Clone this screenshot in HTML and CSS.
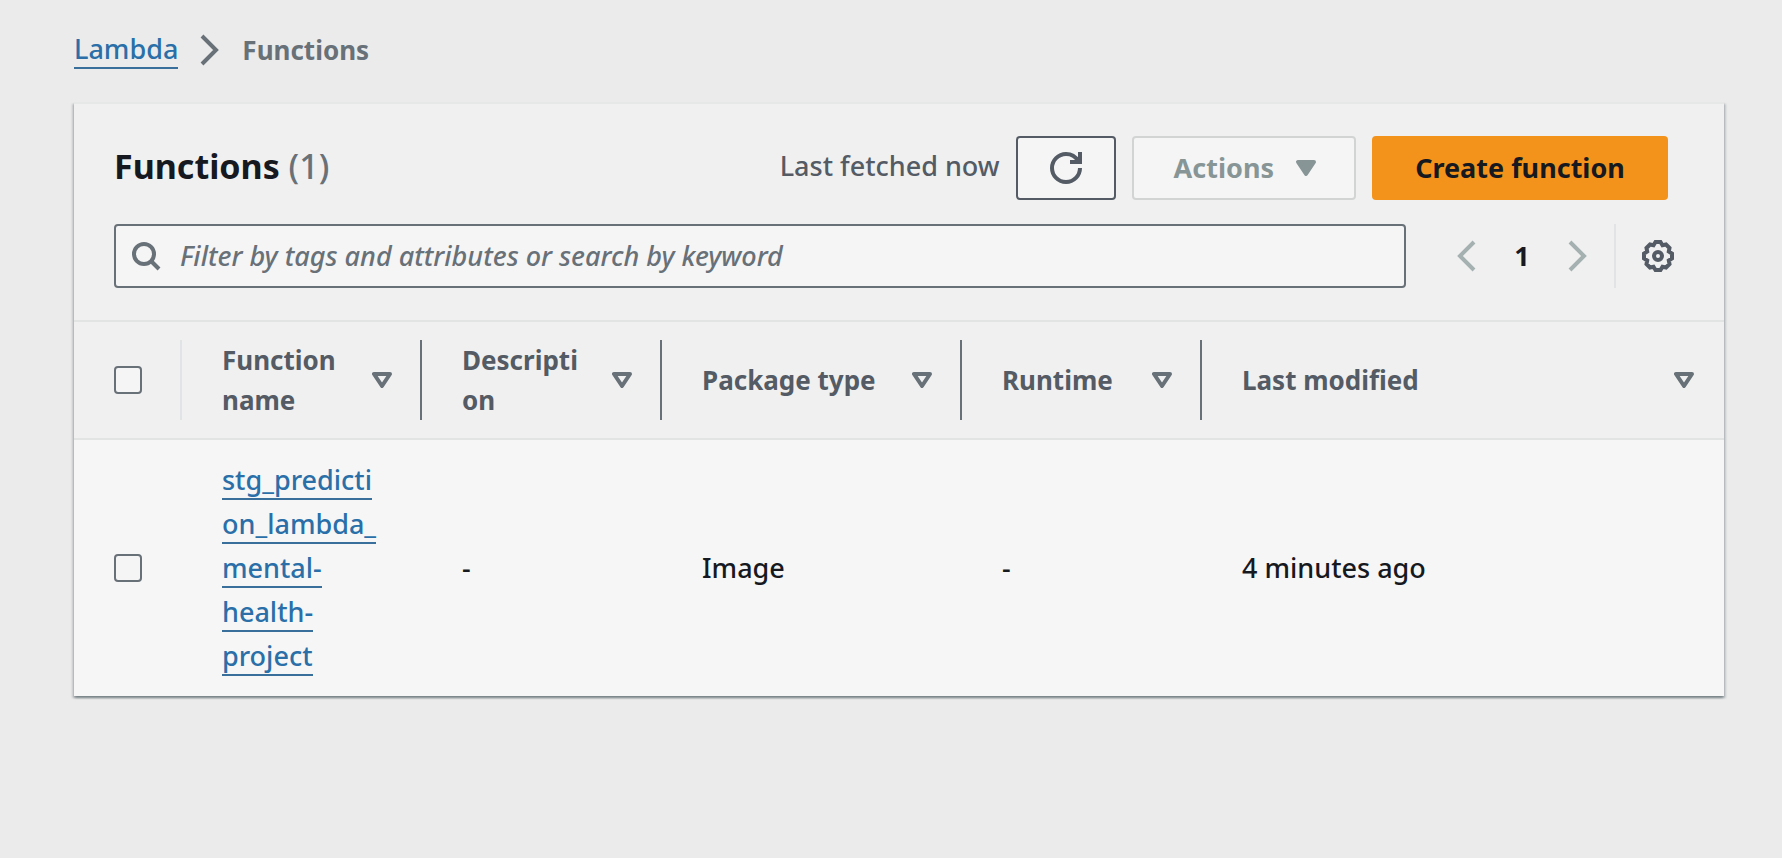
FILE: index.html
```html
<!DOCTYPE html>
<html lang="en">
<head>
<meta charset="utf-8">
<title>Functions - Lambda</title>
<link rel="stylesheet" href="styles.css">
</head>
<body>
<nav class="breadcrumb" aria-label="Breadcrumb">
  <a class="link" href="#lambda">Lambda</a>
  <svg class="crumb-arrow" width="32" height="32" viewBox="0 0 32 32" aria-hidden="true"><path d="M8 2l14 14L8 30"/></svg>
  <span class="current">Functions</span>
</nav>
<main class="panel">
  <header class="panel-head">
    <div class="title-row">
      <h1 class="title">Functions <span class="count">(1)</span></h1>
      <div class="actions">
        <span class="fetched">Last fetched now</span>
        <button class="btn btn-icon" type="button" aria-label="Refresh">
          <svg width="32" height="32" viewBox="0 0 32 32" aria-hidden="true"><path class="stroke" d="M30 16a14 14 0 1 1-14-14c5.500 0 9.500 2.500 12 7"/><path class="fill" d="M28 0h4v12H20V8h5l3-2z"/></svg>
        </button>
        <button class="btn btn-disabled" type="button" disabled>Actions
          <svg width="32" height="32" viewBox="0 0 32 32" aria-hidden="true"><path class="fill round" d="M8 10h16l-8 12z"/></svg>
        </button>
        <button class="btn btn-primary" type="button">Create function</button>
      </div>
    </div>
    <div class="filter-row">
      <label class="search">
        <svg width="32" height="32" viewBox="0 0 32 32" aria-hidden="true"><circle class="stroke" cx="14" cy="14" r="10"/><path class="stroke" d="M21 21l8 8"/></svg>
        <input class="search-input" type="text" aria-label="Filter functions" placeholder="Filter by tags and attributes or search by keyword">
      </label>
      <div class="pager">
        <button class="plain" type="button" disabled aria-label="Previous page"><svg width="32" height="32" viewBox="0 0 32 32" aria-hidden="true"><path class="stroke" d="M24 2L10 16l14 14"/></svg></button>
        <button class="plain page" type="button">1</button>
        <button class="plain" type="button" disabled aria-label="Next page"><svg width="32" height="32" viewBox="0 0 32 32" aria-hidden="true"><path class="stroke" d="M8 2l14 14L8 30"/></svg></button>
      </div>
      <div class="settings">
        <button class="plain" type="button" aria-label="Preferences"><svg width="32" height="32" viewBox="0 0 32 32" aria-hidden="true"><path class="stroke" d="M30 13.500v5L26.800 20.500 27.500 24 24 27.500 20.500 26.800 18.500 30h-5L11.500 26.800 8 27.500 4.500 24 5.200 20.500 2 18.500v-5L5.200 11.500 4.500 8 8 4.500 11.500 5.200 13.500 2h5L20.500 5.200 24 4.500 27.500 8 26.800 11.500z"/><circle class="stroke" cx="16" cy="16" r="4"/></svg></button>
      </div>
    </div>
  </header>
  <table class="grid">
    <thead>
      <tr>
        <th class="col-check"><div class="cell"><input class="check" type="checkbox" aria-label="Select all functions"></div></th>
        <th class="col"><div class="cell">Function<br>name<svg class="sort" width="20" height="16" viewBox="0 0 20 16" aria-hidden="true"><path d="M2 2h16l-8 12z"/></svg></div></th>
        <th class="col"><div class="cell">Descripti<br>on<svg class="sort" width="20" height="16" viewBox="0 0 20 16" aria-hidden="true"><path d="M2 2h16l-8 12z"/></svg></div></th>
        <th class="col-wide"><div class="cell">Package type<svg class="sort" width="20" height="16" viewBox="0 0 20 16" aria-hidden="true"><path d="M2 2h16l-8 12z"/></svg></div></th>
        <th class="col"><div class="cell">Runtime<svg class="sort" width="20" height="16" viewBox="0 0 20 16" aria-hidden="true"><path d="M2 2h16l-8 12z"/></svg></div></th>
        <th><div class="cell">Last modified<svg class="sort" width="20" height="16" viewBox="0 0 20 16" aria-hidden="true"><path d="M2 2h16l-8 12z"/></svg></div></th>
      </tr>
    </thead>
    <tbody>
      <tr>
        <td class="pick"><input class="check" type="checkbox" aria-label="Select stg_prediction_lambda_mental-health-project"></td>
        <td><a class="link" href="#function">stg_predicti<br>on_lambda_<br>mental-<br>health-<br>project</a></td>
        <td>-</td>
        <td>Image</td>
        <td>-</td>
        <td>4 minutes ago</td>
      </tr>
    </tbody>
  </table>
</main>
</body>
</html>
```
FILE: styles.css
```css
* { box-sizing: border-box; }
body {
  margin: 0;
  padding: 28px 58px 40px 74px;
  background: #ebebeb;
  color: #16191f;
  font: 500 27px/44px "Noto Sans", sans-serif;
}
svg { display: block; flex: none; fill: none; }
.stroke { stroke: currentColor; stroke-width: 4; }
.fill { fill: currentColor; }
.round { stroke: currentColor; stroke-width: 4; stroke-linejoin: round; }
button, input { font: inherit; }
.link { color: #2a6fa8; text-decoration: none; border-bottom: 2px solid #38709b; }
.breadcrumb { display: flex; align-items: center; height: 44px; margin-bottom: 30px; color: #687078; }
.breadcrumb .link { line-height: 36px; }
.crumb-arrow { margin: 0 16px; stroke: #687078; stroke-width: 4; }
.current { font-size: 26px; font-weight: 700; }
.panel {
  background: #f0f0f0;
  border-top: 2px solid #e6e7e7;
  box-shadow: 0 2px 2px rgba(0, 28, 36, .3), 2px 2px 2px rgba(0, 28, 36, .15), -2px 2px 2px rgba(0, 28, 36, .15);
}
.panel-head { padding: 32px 40px; }
.title-row { display: flex; align-items: flex-start; justify-content: space-between; padding-right: 16px; margin-bottom: 24px; }
.title { margin: 0; font-size: 34px; line-height: 60px; font-weight: 700; }
.count { font-weight: 500; color: #687078; }
.actions { display: flex; align-items: flex-start; gap: 16px; color: #545b64; }
.fetched { line-height: 60px; }
.btn {
  display: flex; align-items: center; justify-content: center; gap: 16px;
  height: 64px; padding: 0 40px;
  border: 2px solid #545b64; border-radius: 4px;
  background: #f5f5f5; color: #545b64;
  font-weight: 700;
}
.btn-icon { width: 100px; padding: 0; }
.btn-disabled { border-color: #d2d4d4; color: #879596; padding-right: 32px; }
.btn-primary { min-width: 296px; border-color: #f4931c; background: #f4931c; color: #16191f; }
.filter-row { display: flex; align-items: center; height: 64px; }
.search {
  display: flex; align-items: center; gap: 18px; flex: 1;
  height: 64px; padding: 0 14px;
  border: 2px solid #687078; border-radius: 4px;
  background: #f5f5f5; color: #687078;
}
.search-input { flex: 1; min-width: 0; padding: 0; border: 0; outline: 0; background: none; color: #16191f; }
.search-input::placeholder { color: #687078; font-style: italic; opacity: 1; }
.pager { display: flex; align-items: center; gap: 24px; padding: 0 20px 0 44px; }
.plain { padding: 0; border: 0; background: none; color: #545b64; }
.plain:disabled { color: #a5b1b1; }
.page { width: 32px; color: #16191f; font-weight: 700; }
.settings { display: flex; align-items: center; height: 64px; padding: 0 10px 0 26px; border-left: 2px solid #e1e4e4; }
.grid { width: 100%; table-layout: fixed; border-collapse: separate; border-spacing: 0; }
.grid th { padding: 18px 0; border-top: 2px solid #e2e4e4; border-bottom: 2px solid #e2e4e4; color: #545b64; font-size: 26px; line-height: 40px; text-align: left; white-space: nowrap; }
.col-check { width: 108px; }
.col { width: 240px; }
.col-wide { width: 300px; }
.cell { position: relative; display: flex; align-items: center; height: 80px; padding: 0 38px 0 40px; border-right: 2px solid #687078; }
.col-check .cell { border-color: #e1e4e4; }
.grid th:last-child .cell { border-color: transparent; }
.sort { position: absolute; right: 28px; top: 32px; stroke: #687078; stroke-width: 4; stroke-linejoin: round; }
.grid td { padding: 18px 40px; background: #f6f6f6; white-space: nowrap; }
.grid .pick { padding-right: 0; }
.check { display: block; flex: none; width: 28px; height: 28px; margin: 0; appearance: none; border: 2px solid #687078; border-radius: 4px; background: #f5f5f5; }
```
